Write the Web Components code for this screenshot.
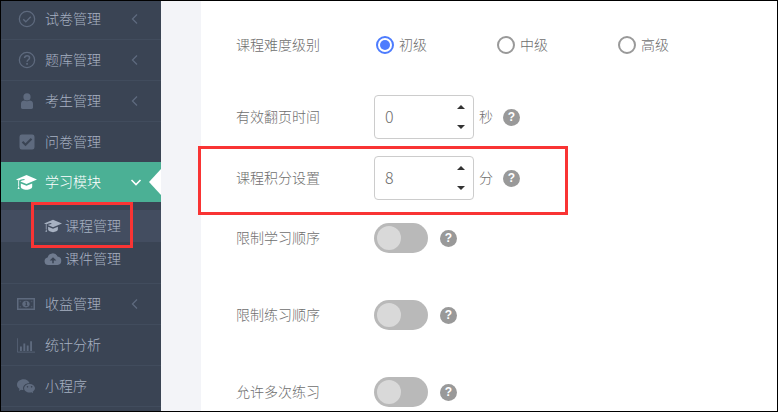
<!DOCTYPE html>
<html lang="zh">
<head>
<meta charset="utf-8">
<title>课程管理</title>
<style>
  html, body { margin: 0; padding: 0; background: #fff; }
  body { font-family: "Noto Sans CJK SC", "Liberation Sans", sans-serif; font-size: 14px; font-weight: 300; }
</style>
</head>
<body>
<app-shot>
  <side-menu slot="side">
    <menu-item icon="check" arrow="left" first>试卷管理</menu-item>
    <menu-item icon="question" arrow="left">题库管理</menu-item>
    <menu-item icon="user" arrow="left">考生管理</menu-item>
    <menu-item icon="square" last>问卷管理</menu-item>
    <menu-item icon="cap" arrow="down" active>学习模块</menu-item>
    <menu-sub>
      <sub-item icon="cap" current>课程管理</sub-item>
      <sub-item icon="cloud">课件管理</sub-item>
    </menu-sub>
    <menu-item icon="money" arrow="left" wide>收益管理</menu-item>
    <menu-item icon="chart" wide>统计分析</menu-item>
    <menu-item icon="wechat" wide>小程序</menu-item>
  </side-menu>

  <form-row label="课程难度级别" after="38">
    <radio-option checked>初级</radio-option>
    <radio-option>中级</radio-option>
    <radio-option>高级</radio-option>
  </form-row>
  <form-row label="有效翻页时间" after="17"><num-box value="0"></num-box><span class="unit">秒</span><help-dot></help-dot></form-row>
  <form-row label="课程积分设置" after="23"><num-box value="8"></num-box><span class="unit">分</span><help-dot></help-dot></form-row>
  <form-row label="限制学习顺序" after="47"><off-switch></off-switch><help-dot gap></help-dot></form-row>
  <form-row label="限制练习顺序" after="47"><off-switch></off-switch><help-dot gap></help-dot></form-row>
  <form-row label="允许多次练习" after="0"><off-switch></off-switch><help-dot gap></help-dot></form-row>
</app-shot>

<script>
  // shared glyphs, everything is drawn on a 24 box
  const ICONS = {
    check: '<circle cx="12" cy="12" r="10.2" fill="none" stroke="currentColor" stroke-width="1.7"/><path d="M7 12.4l3.4 3.4L17 9" fill="none" stroke="currentColor" stroke-width="1.8"/>',
    question: '<circle cx="12" cy="12" r="10.2" fill="none" stroke="currentColor" stroke-width="1.7"/><path d="M8.7 9.4c.2-2 1.6-3 3.4-3 1.900 0 3.300 1.100 3.300 2.800 0 2.500-3.300 2.500-3.300 5" fill="none" stroke="currentColor" stroke-width="2"/><rect x="11" y="16" width="2.200" height="2.300" fill="currentColor"/>',
    user: '<circle cx="12" cy="6.500" r="4.800" fill="currentColor"/><path d="M4 21v-5.500c0-2.800 2.200-4.300 4.500-4.300 2.200 1.400 4.800 1.400 7 0 2.300 0 4.500 1.500 4.500 4.300V21c0 1-1 1.500-2 1.500H6c-1 0-2-.5-2-1.500z" fill="currentColor"/>',
    square: '<path fill-rule="evenodd" d="M5 2h14a3 3 0 0 1 3 3v14a3 3 0 0 1-3 3H5a3 3 0 0 1-3-3V5a3 3 0 0 1 3-3zm5 15.500L19 8.500l-2-2-7 7-3-3-2 2z" fill="currentColor"/>',
    cap: '<path d="M12 3.500L0 8.500l3.500 1.500c1-1.200 3-1.800 6-2l.5 1.200c-2.500.2-4 .8-5 1.600l7 3 12-5.300z" fill="currentColor"/><path d="M5.500 13v3.800c0 1.900 3 3.400 6.500 3.400s6.500-1.500 6.500-3.400V13L12 15.800z" fill="currentColor"/><path d="M3 10v6.500" stroke="currentColor" stroke-width="1"/><path d="M1.800 19.500l1.200-3.300 1.200 3.300z" fill="currentColor"/>',
    cloud: '<path fill-rule="evenodd" d="M6 20a5 5 0 0 1-1.200-9.900A7 7 0 0 1 18 8.500a5.800 5.800 0 0 1 0 11.500zm6-10.500L7.500 14H11v3.500h2V14h3.500z" fill="currentColor"/>',
    money: '<path fill-rule="evenodd" d="M0 4h24v16H0zm2 2v12h20V6z" fill="currentColor"/><path fill-rule="evenodd" d="M12 7.500c3 0 5 2 5 4.500s-2 4.500-5 4.500S7 14.500 7 12s2-4.500 5-4.500zM11 9v1h.7v3.800H11v1h3v-1h-.8V9z" fill="currentColor"/><path d="M3.500 7.500h2v2h-2zM18.500 7.500h2v2h-2zM3.500 14.500h2v2h-2zM18.500 14.500h2v2h-2z" fill="currentColor" opacity=".5"/>',
    chart: '<path d="M.5 3v18.500H24" fill="none" stroke="currentColor" stroke-width="1"/><path d="M4 14h2.500v6H4zM8.500 10H11v10H8.500zM13 12.500h2.500V20H13zM17.500 7H20v13h-2.500z" fill="currentColor"/>',
    wechat: '<path d="M9 3c-5 0-9 3.200-9 7.200 0 2.300 1.300 4.200 3.300 5.500L2.500 18.500l3-1.600c1 .3 2 .5 3 .5-.3-.8-.4-1.500-.4-2.300 0-3.800 3.500-6.800 8-6.800h.7C15.900 5.300 12.800 3 9 3z" fill="currentColor"/><path fill-rule="evenodd" d="M24 15c0-3.200-3.200-5.800-7.300-5.800S9.500 11.800 9.500 15s3.200 5.800 7.200 5.800c.9 0 1.700-.1 2.500-.4l2.400 1.400-.7-2.300C22.700 18.300 24 16.800 24 15zM14 12a1.100 1.100 0 1 1 0 2.200A1.100 1.100 0 0 1 14 12zm5.500 0a1.100 1.100 0 1 1 0 2.200 1.100 1.100 0 0 1 0-2.200z" fill="currentColor"/>'
  }

  /**
   * Defines a custom element with a static shadow template.
   *
   * @param {string} name - The tag name.
   * @param {string} html - The shadow markup.
   */
  const plain = (name, html) => {
    const template = document.createElement('template')
    template.innerHTML = html
    customElements.define(name, class extends HTMLElement {
      constructor () {
        super()
        this.attachShadow({ mode: 'open' }).appendChild(template.content.cloneNode(true))
      }
    })
  }

  plain('app-shot', `
    <style>
      :host { display: block; width: 779px; height: 413px; position: relative; overflow: hidden; background: #fff; }
      .frame { box-sizing: border-box; width: 778px; height: 412px; border: 1px solid #000; display: flex; overflow: hidden; }
      .gutter { width: 40px; flex: none; background: #f3f4f8; }
      .form { flex: 1; padding: 32px 0 0 35px; min-width: 0; }
      .mark { position: absolute; box-sizing: border-box; border: 3px solid #f93434; }
      .main { left: 198px; top: 146px; width: 370px; height: 69px; }
      .nav { left: 31px; top: 202px; width: 102px; height: 46px; }
    </style>
    <div class="frame">
      <slot name="side"></slot>
      <div class="gutter"></div>
      <div class="form"><slot></slot></div>
    </div>
    <div class="mark main"></div>
    <div class="mark nav"></div>
  `)

  plain('side-menu', `
    <style>
      :host { display: block; width: 160px; flex: none; background: #3a4454; }
    </style>
    <slot></slot>
  `)

  customElements.define('menu-item', class extends HTMLElement {
    constructor () {
      super()
      const active = this.hasAttribute('active')
      const arrow = this.getAttribute('arrow')
      const first = this.hasAttribute('first')
      const last = this.hasAttribute('last')
      const wide = this.hasAttribute('wide')
      this.attachShadow({ mode: 'open' }).innerHTML = `
        <style>
          :host { display: block; }
          .row { box-sizing: border-box; height: ${first ? 39 : last ? 40 : 41}px; display: flex; align-items: center; padding: 0 0 ${first ? 2 : 0}px 17px; border-bottom: ${last ? 0 : 1}px solid #414c5d; color: #a7b1c2; }
          .row.on { background: #4bb095; color: #fff; border-bottom: 0; position: relative; height: 40px; padding: 0 0 0 15px; }
          .ico { width: 18px; height: 18px; color: #5e6a7e; flex: none; margin: 0 ${wide ? 10 : 9}px 0 ${wide ? -1 : 0}px; }
          .on .ico { width: 21px; height: 21px; color: #fff; margin-right: 8px; }
          .txt { flex: 1; margin-top: -2px; }
          .arrow { width: 12px; height: 12px; margin-right: 20px; flex: none; color: #5e6a7e; }
          .on .arrow { color: #fff; margin-right: 19px; }
          .tip { position: absolute; right: 0; top: 7px; border: 13px solid transparent; border-right: 12px solid #fff; border-left: 0; }
        </style>
        <div class="row ${active ? 'on' : ''}">
          <svg class="ico" viewBox="0 0 24 24">${ICONS[this.getAttribute('icon')]}</svg>
          <span class="txt"><slot></slot></span>
          ${arrow === 'left' ? '<svg class="arrow" viewBox="0 0 12 12"><path d="M8 1.500L3.500 6 8 10.500" fill="none" stroke="currentColor" stroke-width="1.300"/></svg>' : ''}
          ${arrow === 'down' ? '<svg class="arrow" viewBox="0 0 12 12"><path d="M1.500 4L6 8.500 10.500 4" fill="none" stroke="currentColor" stroke-width="1.600"/></svg>' : ''}
          ${active ? '<i class="tip"></i>' : ''}
        </div>`
    }
  })

  plain('menu-sub', `
    <style>
      :host { display: block; box-sizing: border-box; height: 82px; padding-top: 8px; border-bottom: 1px solid #414c5d; }
    </style>
    <slot></slot>
  `)

  customElements.define('sub-item', class extends HTMLElement {
    constructor () {
      super()
      const current = this.hasAttribute('current')
      this.attachShadow({ mode: 'open' }).innerHTML = `
        <style>
          :host { display: block; }
          .row { height: 34px; display: flex; align-items: center; padding-left: 43px; color: #a7b1c2; }
          .row.cur { height: 32px; background: #434d60; }
          svg { width: 18px; height: 18px; color: #6f7b8f; margin-right: 3px; flex: none; }
          .cur svg { color: #a7b1c2; }
          span { margin-top: -2px; }
        </style>
        <div class="row ${current ? 'cur' : ''}">
          <svg viewBox="0 0 24 24">${ICONS[this.getAttribute('icon')]}</svg><span><slot></slot></span>
        </div>`
    }
  })

  customElements.define('form-row', class extends HTMLElement {
    constructor () {
      super()
      this.attachShadow({ mode: 'open' }).innerHTML = `
        <style>
          :host { display: flex; align-items: center; color: #6e6e6e; margin-bottom: ${this.getAttribute('after')}px; }
          .label { width: 138px; flex: none; margin-top: -2px; }
          ::slotted(.unit) { margin: -2px 0 0 5px; }
        </style>
        <span class="label">${this.getAttribute('label')}</span><slot></slot>`
    }
  })

  customElements.define('radio-option', class extends HTMLElement {
    constructor () {
      super()
      const on = this.hasAttribute('checked')
      this.attachShadow({ mode: 'open' }).innerHTML = `
        <style>
          :host { display: flex; align-items: center; width: 121px; height: 24px; color: #6e6e6e; }
          .ring { box-sizing: border-box; width: 18px; height: 18px; border-radius: 50%; margin: 0 5px 0 2px; border: 2px solid ${on ? '#4d7cfe' : '#999'}; display: grid; place-items: center; }
          .ring i { width: 10px; height: 10px; border-radius: 50%; background: #4d7cfe; }
          span.t { margin-top: -2px; }
        </style>
        <span class="ring">${on ? '<i></i>' : ''}</span><span class="t"><slot></slot></span>`
    }
  })

  customElements.define('num-box', class extends HTMLElement {
    constructor () {
      super()
      this.attachShadow({ mode: 'open' }).innerHTML = `
        <style>
          :host { display: flex; box-sizing: border-box; width: 100px; height: 44px; border: 1px solid #ccc; border-radius: 4px; align-items: center; padding-left: 10px; color: #6e6e6e; font-size: 16px; background: #fff; }
          span { flex: 1; margin-top: -2px; }
          .spin { width: 10px; height: 24px; margin-right: 7px; display: flex; flex-direction: column; justify-content: space-between; align-items: center; }
          .spin i { height: 0; width: 0; border-left: 4px solid transparent; border-right: 4px solid transparent; }
          .up { border-bottom: 4px solid #333; }
          .dn { border-top: 4px solid #333; }
        </style>
        <span>${this.getAttribute('value')}</span>
        <div class="spin"><i class="up"></i><i class="dn"></i></div>`
    }
  })

  customElements.define('help-dot', class extends HTMLElement {
    constructor () {
      super()
      this.attachShadow({ mode: 'open' }).innerHTML = `
        <style>
          :host { display: grid; place-items: center; width: 17px; height: 17px; border-radius: 50%; background: #999; color: #fff; font: bold 12px "Liberation Sans", sans-serif; margin-left: ${this.hasAttribute('gap') ? 12 : 10}px; }
        </style>?`
    }
  })

  plain('off-switch', `
    <style>
      :host { display: flex; box-sizing: border-box; width: 54px; height: 30px; border-radius: 15px; background: #b9b9b9; padding: 3px; }
      i { width: 24px; height: 24px; border-radius: 50%; background: #d9d9d9; }
    </style>
    <i></i>
  `)
</script>
</body>
</html>
